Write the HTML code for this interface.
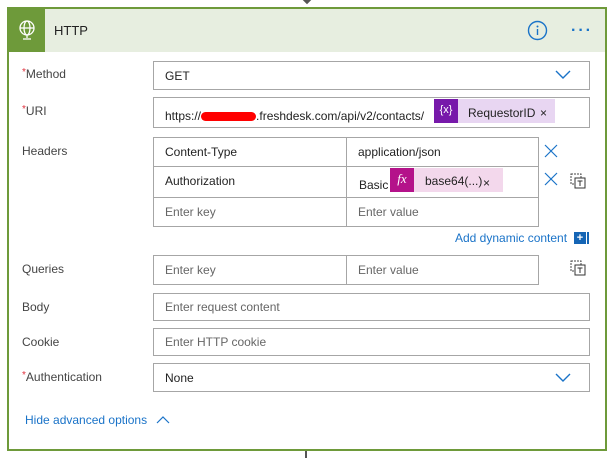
<html><head><style>
body{margin:0;width:613px;height:458px;background:#fff;font-family:"Liberation Sans",sans-serif;font-size:12px;color:#333;position:relative;overflow:hidden}
.a{position:absolute}
.lbl{position:absolute;left:22px;color:#444;font-size:12px}
.req{color:#e0313e;font-size:10px;vertical-align:top}
.box{position:absolute;border:1px solid #a6a6a6;box-sizing:border-box;background:#fff}
.t{position:absolute;top:50%;transform:translateY(-50%);left:11px;white-space:nowrap}
.ph{color:#666}
</style></head><body>
<div class="a" style="left:304px;top:0;width:6px;height:6px;background:#555;transform:rotate(45deg);top:-3px"></div>
<div class="a" style="left:7px;top:7px;width:600px;height:444px;border:2px solid #6e9a3a;box-sizing:border-box"></div>
<div class="a" style="left:9px;top:9px;width:596px;height:43px;background:#e7eee0"></div>
<div class="a" style="left:9px;top:9px;width:36px;height:43px;background:#6e9a3a"></div>
<svg class="a" style="left:16px;top:17px" width="22" height="26" viewBox="0 0 22 26"><g fill="none" stroke="#fff" stroke-width="1.3"><circle cx="11" cy="11" r="7"/><ellipse cx="11" cy="11" rx="3" ry="7"/><line x1="4" y1="11" x2="18" y2="11"/><line x1="11" y1="18" x2="11" y2="21"/><line x1="7" y1="22" x2="15" y2="22"/></g></svg>
<div class="a" style="left:54px;top:23px;font-size:13px;color:#222">HTTP</div>
<svg class="a" style="left:527px;top:20px" width="21" height="21"><circle cx="10.5" cy="10.5" r="9" fill="none" stroke="#1a73c8" stroke-width="1.4"/><line x1="10.5" y1="9" x2="10.5" y2="15" stroke="#1a73c8" stroke-width="1.4"/><circle cx="10.5" cy="6.5" r="1" fill="#1a73c8"/></svg>
<div class="a" style="left:571px;top:22px;color:#1a73c8;font-size:16px;letter-spacing:2px;font-weight:bold">···</div>

<div class="lbl" style="top:67px"><span class="req">*</span>Method</div>
<div class="box" style="left:153px;top:61px;width:437px;height:29px"><span class="t" style="color:#222">GET</span></div>
<svg class="a" style="left:555px;top:70px" width="16" height="10"><polyline points="1,1 8,8 15,1" fill="none" stroke="#1a73c8" stroke-width="1.4"/></svg>

<div class="lbl" style="top:104px"><span class="req">*</span>URI</div>
<div class="box" style="left:153px;top:97px;width:437px;height:31px"></div>
<div class="a" style="left:165px;top:109px;color:#222">https://<span style="display:inline-block;width:55px;height:9px;background:#f00;border-radius:5px;vertical-align:middle"></span>.freshdesk.com/api/v2/contacts/</div>
<div class="a" style="left:434px;top:99px;width:121px;height:24px;background:#e8d6f2"></div>
<div class="a" style="left:434px;top:99px;width:24px;height:24px;background:#7719aa;color:#fff;font-size:11px;text-align:center;line-height:22px">{x}</div>
<div class="a" style="left:468px;top:106px;color:#222">RequestorID</div>
<div class="a" style="left:540px;top:106px;color:#222">×</div>

<div class="lbl" style="top:144px">Headers</div>
<div class="box" style="left:153px;top:137px;width:386px;height:90px"></div>
<div class="a" style="left:153px;top:166px;width:386px;height:1px;background:#a6a6a6"></div>
<div class="a" style="left:153px;top:197px;width:386px;height:1px;background:#a6a6a6"></div>
<div class="a" style="left:346px;top:137px;width:1px;height:90px;background:#a6a6a6"></div>
<div class="a" style="left:165px;top:145px;color:#222">Content-Type</div>
<div class="a" style="left:358px;top:145px;color:#222">application/json</div>
<div class="a" style="left:165px;top:174px;color:#222">Authorization</div>
<div class="a" style="left:359px;top:178px;color:#222">Basic</div>
<div class="a" style="left:390px;top:168px;width:113px;height:24px;background:#f3d8ec"></div>
<div class="a" style="left:390px;top:168px;width:24px;height:24px;background:#b4128a;color:#fff;font-family:'Liberation Serif',serif;font-style:italic;font-size:13px;text-align:center;line-height:22px">fx</div>
<div class="a" style="left:425px;top:174px;color:#222">base64(...)</div>
<div class="a" style="left:483px;top:176px;color:#222">×</div>
<div class="a ph" style="left:165px;top:205px">Enter key</div>
<div class="a ph" style="left:358px;top:205px">Enter value</div>
<svg class="a" style="left:544px;top:144px" width="14" height="14"><path d="M1 1L13 13M13 1L1 13" stroke="#1a73c8" stroke-width="1.2"/></svg>
<svg class="a" style="left:544px;top:172px" width="14" height="14"><path d="M1 1L13 13M13 1L1 13" stroke="#1a73c8" stroke-width="1.2"/></svg>
<svg class="a" style="left:570px;top:173px" width="16" height="16"><rect x="1" y="1" width="10" height="10" fill="none" stroke="#444" stroke-dasharray="2,1"/><rect x="5" y="5" width="10" height="10" fill="#fff" stroke="#333"/><path d="M7.5 8h5M10 8v5" stroke="#333"/></svg>
<div class="a" style="left:455px;top:231px;color:#1a73c8">Add dynamic content</div>
<div class="a" style="left:574px;top:232px;width:12px;height:12px;background:#1565b5;color:#fff;font-size:11px;line-height:12px;text-align:center;font-weight:bold">+</div>
<div class="a" style="left:587px;top:232px;width:2px;height:12px;background:#1565b5"></div>

<div class="lbl" style="top:262px">Queries</div>
<div class="box" style="left:153px;top:255px;width:386px;height:30px"></div>
<div class="a" style="left:346px;top:255px;width:1px;height:30px;background:#a6a6a6"></div>
<div class="a ph" style="left:165px;top:263px">Enter key</div>
<div class="a ph" style="left:358px;top:263px">Enter value</div>
<svg class="a" style="left:570px;top:260px" width="16" height="16"><rect x="1" y="1" width="10" height="10" fill="none" stroke="#444" stroke-dasharray="2,1"/><rect x="5" y="5" width="10" height="10" fill="#fff" stroke="#333"/><path d="M7.5 8h5M10 8v5" stroke="#333"/></svg>

<div class="lbl" style="top:300px">Body</div>
<div class="box" style="left:153px;top:293px;width:437px;height:28px"><span class="t ph">Enter request content</span></div>
<div class="lbl" style="top:335px">Cookie</div>
<div class="box" style="left:153px;top:328px;width:437px;height:28px"><span class="t ph">Enter HTTP cookie</span></div>
<div class="lbl" style="top:370px"><span class="req">*</span>Authentication</div>
<div class="box" style="left:153px;top:363px;width:437px;height:29px"><span class="t" style="color:#222">None</span></div>
<svg class="a" style="left:555px;top:373px" width="16" height="10"><polyline points="1,1 8,8 15,1" fill="none" stroke="#1a73c8" stroke-width="1.4"/></svg>
<div class="a" style="left:25px;top:413px;color:#1a73c8">Hide advanced options</div>
<svg class="a" style="left:156px;top:415px" width="14" height="9"><polyline points="1,8 7,2 13,8" fill="none" stroke="#1a73c8" stroke-width="1.2"/></svg>
<div class="a" style="left:305px;top:451px;width:2px;height:7px;background:#555"></div>
</body></html>
